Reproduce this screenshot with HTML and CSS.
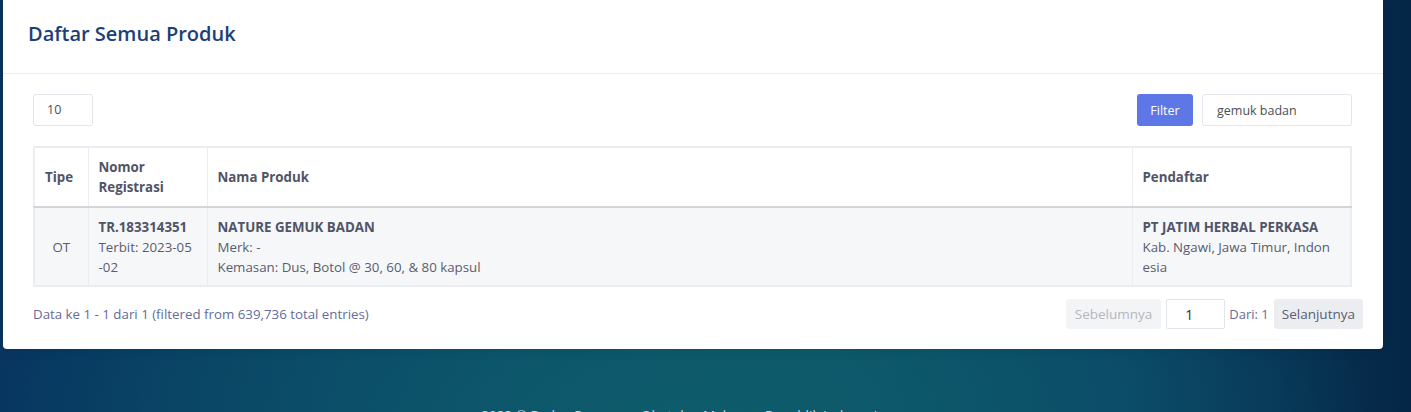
FILE: index.html
```html
<!DOCTYPE html>
<html lang="id">

<head>
    <meta charset="UTF-8" />
    <meta name="viewport" content="width=device-width, initial-scale=1.0" />
    <title>Daftar Semua Produk</title>

    <link rel="stylesheet" href="styles.css">
</head>

<body>
    <div class="page">
        <div class="portlet">
            <div class="portlet-head">
                <h3 class="portlet-title">Daftar Semua Produk</h3>
            </div>
            <div class="portlet-body">
                <div class="toolbar">
                    <div class="length-box">10</div>
                    <div class="search">
                        <button class="btn-filter" type="button">Filter</button>
                        <input class="search-input" type="text" value="gemuk badan" />
                    </div>
                </div>

                <table class="data-table">
                    <colgroup>
                        <col class="col-tipe">
                        <col class="col-nomor">
                        <col>
                        <col class="col-pendaftar">
                    </colgroup>
                    <thead>
                        <tr>
                            <th>Tipe</th>
                            <th>Nomor Registrasi</th>
                            <th>Nama Produk</th>
                            <th>Pendaftar</th>
                        </tr>
                    </thead>
                    <tbody>
                        <tr>
                            <td class="center">OT</td>
                            <td><b>TR.183314351</b><br>Terbit: 2023-05<wbr>-02</td>
                            <td><b>NATURE GEMUK BADAN</b><br>Merk: -<br>Kemasan: Dus, Botol @ 30, 60, &amp; 80 kapsul</td>
                            <td><b>PT JATIM HERBAL PERKASA</b><br>Kab. Ngawi, Jawa Timur, Indon<wbr>esia</td>
                        </tr>
                    </tbody>
                </table>

                <div class="table-foot">
                    <div class="info">Data ke 1 - 1 dari 1 (filtered from 639,736 total entries)</div>
                    <div class="paging">
                        <button class="btn-page disabled" type="button">Sebelumnya</button>
                        <input class="page-input" type="text" value="1" />
                        <span class="page-of">Dari: 1</span>
                        <button class="btn-page" type="button">Selanjutnya</button>
                    </div>
                </div>
            </div>
        </div>

        <div class="footer">2023 &copy; Badan Pengawas Obat dan Makanan Republik Indonesia</div>
    </div>
</body>

</html>
```

FILE: styles.css
```css
body {
    margin: 0;
    font-family: "Open Sans", sans-serif;
    font-size: 13.3px;
    color: #595d6e;
    height: 412px;
    overflow: hidden;
    background: #073055;
    background-image:
        radial-gradient(ellipse 700px 240px at 48% 100%, rgba(14, 92, 108, 0.95), rgba(14, 92, 108, 0) 100%),
        linear-gradient(90deg, #073560 0%, #0a4868 35%, #0c5566 55%, #0a4466 80%, #052646 100%);
}

.page {
    padding: 0 28px 0 3px;
}

.portlet {
    background: #fff;
    border-radius: 0 0 4px 4px;
    box-shadow: 0 0 13px rgba(0, 0, 0, 0.1);
}

.portlet-head {
    height: 74px;
    display: flex;
    align-items: center;
    padding: 0 25px;
    border-bottom: 1px solid #ebedf2;
    box-sizing: border-box;
}

.portlet-title {
    margin: 0 0 6px;
    font-size: 20px;
    font-weight: 600;
    color: #1b4079;
}

.portlet-body {
    padding: 20px 31px 20px 30px;
}

.toolbar {
    display: flex;
    justify-content: space-between;
    align-items: center;
    margin-bottom: 20px;
}

.length-box {
    width: 60px;
    height: 32px;
    box-sizing: border-box;
    border: 1px solid #e2e5ec;
    border-radius: 3px;
    padding: 0 13px;
    line-height: 30px;
    font-size: 12.5px;
    color: #495057;
}

.search {
    display: flex;
    gap: 9px;
}

.btn-filter {
    width: 56px;
    height: 32px;
    border: none;
    border-radius: 3px;
    background: #5d78e6;
    color: #fff;
    font-family: inherit;
    font-size: 12.5px;
}

.search-input {
    width: 150px;
    height: 32px;
    box-sizing: border-box;
    border: 1px solid #e2e5ec;
    border-radius: 3px;
    padding: 0 14px;
    font-family: inherit;
    font-size: 12.5px;
    color: #495057;
}

.data-table {
    width: 100%;
    table-layout: fixed;
    border-collapse: collapse;
    border: 2px solid #ebedf2;
    line-height: 20px;
}

.col-tipe {
    width: 54px;
}

.col-nomor {
    width: 119px;
}

.col-pendaftar {
    width: 219px;
}

.data-table th {
    text-align: left;
    font-weight: 700;
    color: #505467;
    padding: 9px 10px;
    height: 40px;
    border: 1px solid #ebedf2;
    border-bottom: 2px solid #d4d5d9;
}

.data-table td {
    vertical-align: top;
    padding: 9px 10px 8px 10px;
    background: #f6f7f9;
    border: 1px solid #ebedf2;
    border-top: 0;
}

.data-table td b {
    font-weight: 700;
    color: #505467;
}

.data-table .center {
    text-align: center;
    vertical-align: middle;
}

.table-foot {
    display: flex;
    justify-content: space-between;
    align-items: center;
    margin-top: 12px;
    margin-right: -11px;
}

.info {
    color: #646c9a;
}

.paging {
    display: flex;
    align-items: center;
    gap: 5px;
}

.btn-page {
    height: 30px;
    border: none;
    border-radius: 3px;
    background: #ebedf1;
    color: #5b5e70;
    font-family: inherit;
    font-size: 13.5px;
    padding: 0 8px;
}

.btn-page.disabled {
    background: #f3f4f6;
    color: #b5b7c2;
    padding: 0 9px;
}

.page-input {
    width: 59px;
    height: 30px;
    box-sizing: border-box;
    border: 1px solid #e2e5ec;
    border-radius: 2px;
    padding: 0 18px;
    font-family: inherit;
    font-size: 14px;
    color: #333;
}

.page-of {
    color: #646c9a;
    font-size: 13px;
    margin-left: -1px;
}

.footer {
    text-align: center;
    color: #c9d4dc;
    font-size: 13.5px;
    margin-top: 57px;
    padding-right: 20px;
}
```
